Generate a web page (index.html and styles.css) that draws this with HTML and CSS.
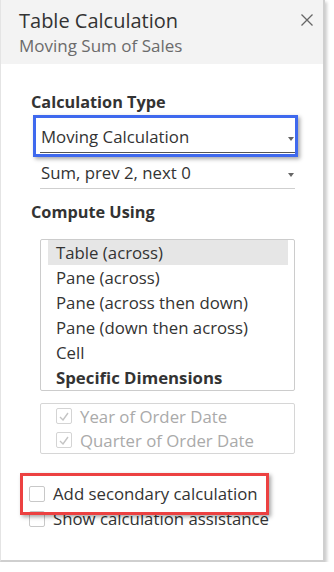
FILE: index.html
```html
<!DOCTYPE html>
<html lang="en">
<head>
  <meta charset="UTF-8">
  <meta name="viewport" content="width=device-width, initial-scale=1.0">
  <title>Table Calculation</title>
  <link rel="stylesheet" href="styles.css">
</head>
<body>
  <div class="panel">
    <header class="panel-header">
      <h1 class="title">Table Calculation</h1>
      <p class="subtitle">Moving Sum of Sales</p>
      <button class="close-btn" aria-label="Close">
        <svg width="12" height="12" viewBox="0 0 12 12"><path d="M0.5 0.5 L11.5 11.5 M11.5 0.5 L0.5 11.5" stroke="#666" stroke-width="1.3" fill="none"/></svg>
      </button>
    </header>

    <main class="panel-body">
      <h2 class="section-title">Calculation Type</h2>
      <div class="dropdown dropdown-active">
        <span>Moving Calculation</span>
        <span class="arrow"></span>
      </div>
      <div class="dropdown">
        <span>Sum, prev 2, next 0</span>
        <span class="arrow"></span>
      </div>

      <h2 class="section-title compute-title">Compute Using</h2>
      <ul class="list">
        <li class="selected">Table (across)</li>
        <li>Pane (across)</li>
        <li>Pane (across then down)</li>
        <li>Pane (down then across)</li>
        <li>Cell</li>
        <li class="bold">Specific Dimensions</li>
      </ul>

      <div class="dims">
        <label class="dim"><span class="check checked"><svg width="10" height="9" viewBox="0 0 10 9"><path d="M1 5 L4 8 L9 1" stroke="#c4c4c4" stroke-width="1.4" fill="none"/></svg></span>Year of Order Date</label>
        <label class="dim"><span class="check checked"><svg width="10" height="9" viewBox="0 0 10 9"><path d="M1 5 L4 8 L9 1" stroke="#c4c4c4" stroke-width="1.4" fill="none"/></svg></span>Quarter of Order Date</label>
      </div>

      <div class="options">
        <label class="option"><span class="check"></span>Add secondary calculation</label>
        <label class="option"><span class="check"></span>Show calculation assistance</label>
      </div>
    </main>

    <div class="mark mark-blue"></div>
    <div class="mark mark-red"></div>
  </div>
</body>
</html>
```

FILE: styles.css
```css
body {
  margin: 0;
  padding: 0;
  background-color: #ffffff;
  font-family: "Open Sans", Lato, sans-serif;
  color: #333;
}
.panel {
  position: relative;
  width: 325px;
  height: 562px;
  box-sizing: border-box;
  border-right: 2px solid #cfcfcf;
  border-bottom: 2px solid #cfcfcf;
  border-left: 1px solid #e4e4e4;
  box-shadow: 2px 2px 3px rgba(0, 0, 0, 0.2);
  background: #fff;
}
.panel-header {
  position: relative;
  height: 64px;
  box-sizing: border-box;
  padding: 9px 0 0 18px;
  background-color: #f3f3f3;
}
.title {
  margin: 0;
  font-size: 20px;
  line-height: 24px;
  font-weight: normal;
  color: #333;
}
.subtitle {
  margin: 3px 0 0;
  font-size: 17px;
  line-height: 20px;
  color: #6b6b6b;
}
.close-btn {
  position: absolute;
  top: 14px;
  right: 10px;
  padding: 0;
  border: none;
  background: none;
  line-height: 0;
}
.panel-body {
  padding: 29px 0 0 28px;
}
.section-title {
  margin: 0 0 6px 2px;
  font-size: 16.3px;
  line-height: 18px;
  font-weight: bold;
  color: #333;
}
.compute-title {
  margin-top: 14px;
  margin-bottom: 18px;
}
.dropdown {
  display: flex;
  align-items: center;
  justify-content: space-between;
  width: 255px;
  margin-left: 11px;
  padding: 10px 1px 5px 1px;
  box-sizing: border-box;
  font-size: 16.8px;
  line-height: 20px;
  border-bottom: 1px solid #cfcfcf;
}
.dropdown-active {
  border-bottom-color: #555;
}
.arrow {
  width: 0;
  height: 0;
  margin-top: 4px;
  border-left: 3px solid transparent;
  border-right: 3px solid transparent;
  border-top: 4px solid #666;
}
.list {
  list-style: none;
  width: 255px;
  margin: 0 0 12px 11px;
  padding: 0 6px 0 7px;
  box-sizing: border-box;
  border: 1px solid #cccccc;
  border-radius: 2px;
}
.list li {
  height: 25px;
  padding-left: 8px;
  font-size: 16.8px;
  line-height: 25px;
  color: #333;
}
.list .selected {
  background-color: #e6e6e6;
}
.list .bold {
  font-weight: bold;
}
.dims {
  width: 255px;
  margin-left: 11px;
  padding: 0 0 1px 15px;
  box-sizing: border-box;
  border: 1px solid #d6d6d6;
  border-radius: 2px;
}
.dim, .option {
  display: flex;
  align-items: center;
  height: 24px;
  font-size: 16.8px;
  color: #aaaaaa;
}
.check {
  display: flex;
  align-items: center;
  justify-content: center;
  flex: none;
  width: 16px;
  height: 16px;
  margin-right: 8px;
  box-sizing: border-box;
  border: 1px solid #d4d4d4;
  border-radius: 2px;
  background: #fff;
}
.options {
  margin-top: 27px;
}
.option {
  height: 25px;
  color: #333;
}
.option .check {
  border-color: #c8c8c8;
}
.mark {
  position: absolute;
  box-sizing: border-box;
  border: 3px solid;
  box-shadow: 2px 2px 4px rgba(0, 0, 0, 0.35);
}
.mark-blue {
  left: 32px;
  top: 115px;
  width: 265px;
  height: 42px;
  border-color: #3f69ee;
}
.mark-red {
  left: 19px;
  top: 473px;
  width: 249px;
  height: 42px;
  border-color: #ec4141;
}
```
